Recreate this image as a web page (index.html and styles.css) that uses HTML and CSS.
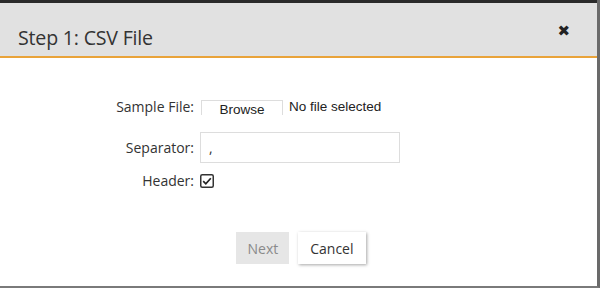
FILE: index.html
```html
<!DOCTYPE html>
<html>
<head>
<meta charset="utf-8">
<link rel="stylesheet" href="styles.css">
</head>
<body>
<div class="page">
  <div class="navstrip"></div>
  <div class="modal">
    <div class="modal-header">
      <h1 class="title">Step 1: CSV File</h1>
      <span class="close">&#x2716;</span>
    </div>
    <div class="modal-body">
      <div class="form">
        <div class="row row-file">
          <label class="label">Sample File:</label>
          <div class="file">
            <span class="browse"><span class="browse-text">Browse</span></span>
            <span class="nofile">No file selected</span>
          </div>
        </div>
        <div class="row row-sep">
          <label class="label">Separator:</label>
          <div class="input">,</div>
        </div>
        <div class="row row-head">
          <label class="label">Header:</label>
          <span class="checkbox">
            <svg width="14" height="14" viewBox="0 0 14 14"><rect x="0.75" y="0.75" width="12.5" height="12.5" rx="1.5" fill="#fff" stroke="#333" stroke-width="1.5"/><path d="M3.2 7.2 L5.8 9.8 L10.8 4.2" fill="none" stroke="#222" stroke-width="1.7"/></svg>
          </span>
        </div>
      </div>
      <div class="actions">
        <button class="btn btn-next">Next</button>
        <button class="btn btn-cancel">Cancel</button>
      </div>
    </div>
  </div>
</div>
</body>
</html>
```
FILE: styles.css
```css
html, body { margin: 0; padding: 0; }
body {
  width: 600px;
  height: 288px;
  overflow: hidden;
  background: #fff;
  font-family: "Open Sans", "DejaVu Sans", sans-serif;
}
.page {
  height: 288px;
  display: flex;
  flex-direction: column;
  box-sizing: border-box;
  border-right: 3px solid #6a6a6a;
  border-bottom: 2px solid #7a7a7a;
}
.navstrip {
  height: 3px;
  background: #2a2a2a;
  flex: none;
}
.modal { flex: 1; display: flex; flex-direction: column; }
.modal-header {
  height: 55px;
  box-sizing: border-box;
  background: #e1e1e1;
  border-bottom: 2px solid #e9a33a;
  position: relative;
  display: flex;
  align-items: center;
  padding: 15px 29px 0 18px;
}
.title {
  margin: 0;
  font-size: 19.6px;
  font-weight: 400;
  color: #333;
  letter-spacing: -0.2px;
}
.close {
  position: absolute;
  right: 27px;
  top: 19px;
  font-size: 15px;
  color: #222;
  font-family: "DejaVu Sans", sans-serif;
}
.modal-body {
  flex: 1;
  display: flex;
  flex-direction: column;
}
.form {
  display: grid;
  grid-template-columns: 200px auto;
  row-gap: 0;
  margin-top: 39px;
}
.row { display: contents; }
.label {
  font-size: 14px;
  color: #333;
  text-align: right;
  padding-right: 6px;
  align-self: center;
}
.row-file .label { height: 20px; line-height: 20px; }
.file {
  display: flex;
  align-items: flex-start;
  height: 20px;
}
.browse {
  box-sizing: border-box;
  width: 82px;
  height: 15px;
  border: 1px solid #ddd;
  border-bottom: none;
  margin-top: 3px;
  margin-left: 1px;
  overflow: hidden;
  text-align: center;
  font-family: "Liberation Sans", sans-serif;
  font-size: 13.5px;
  color: #222;
  line-height: 17px;
}
.nofile {
  margin-left: 6px;
  font-family: "Liberation Sans", sans-serif;
  font-size: 13.5px;
  color: #222;
  height: 17px;
  overflow: hidden;
  line-height: 20px;
}
.row-sep .label { margin-top: 15px; }
.input {
  margin-top: 15px;
  width: 200px;
  height: 31px;
  box-sizing: border-box;
  border: 1px solid #ddd;
  padding-left: 8px;
  font-size: 14px;
  line-height: 29px;
  color: #333;
}
.row-head .label { margin-top: 7px; }
.checkbox { margin-top: 7px; display: flex; align-items: center; height: 21px; }
.checkbox svg { display: block; }
.actions {
  display: flex;
  justify-content: center;
  gap: 9px;
  margin-top: 41px;
  padding-left: 5px;
}
.btn {
  font-family: "Open Sans", sans-serif;
  font-size: 14px;
  border: none;
  height: 32px;
  padding: 0 12px;
}
.btn-next {
  background: #e6e6e6;
  color: #8a8a8a;
  padding: 0 11px;
}
.btn-cancel {
  background: #fff;
  color: #333;
  box-shadow: 1px 1px 3px rgba(0,0,0,0.35);
}
```
